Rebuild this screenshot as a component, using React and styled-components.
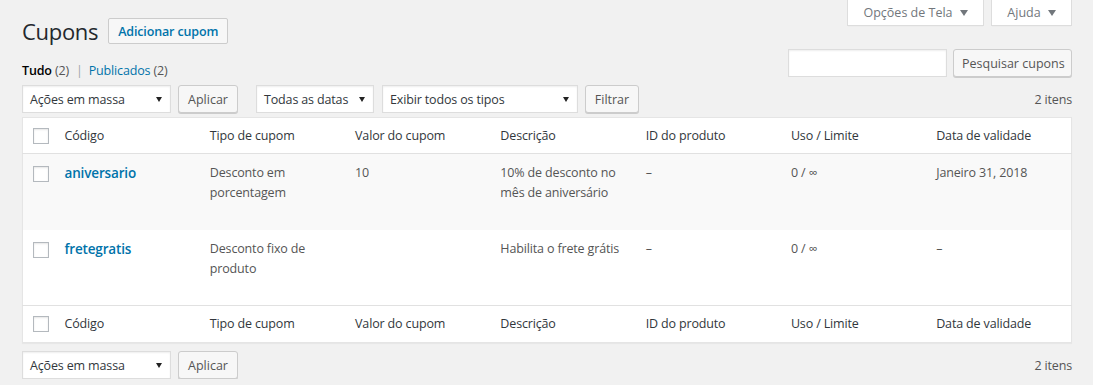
import React from "react";
import styled, { createGlobalStyle } from "styled-components";

const Global = createGlobalStyle`
  html, body { margin: 0; padding: 0; background: #f1f1f1; }
  body { font-family: "Open Sans", "Noto Sans", sans-serif; font-size: 12.5px; letter-spacing: -0.15px; color: #444; }
  * { box-sizing: border-box; }
`;

const Page = styled.div`
  padding: 0 21px 0 22px;
  width: 1093px;
`;

const TopRow = styled.div`
  display: flex;
  justify-content: space-between;
  align-items: flex-start;
`;

const TitleBlock = styled.div`
  display: flex;
  align-items: center;
  gap: 10px;
  padding-top: 18px;
`;

const Title = styled.h1`
  margin: 0;
  font-size: 22px;
  letter-spacing: -0.3px;
  font-weight: 400;
  line-height: 26px;
  color: #23282d;
`;

const PageTitleAction = styled.a`
  display: inline-flex;
  align-items: center;
  height: 26px;
  padding: 0 9px;
  border: 1px solid #ccc;
  border-radius: 2px;
  background: #f7f7f7;
  color: #0073aa;
  font-weight: 600;
  font-size: 12.5px;
  text-decoration: none;
`;

const MetaLinks = styled.div`
  display: flex;
  gap: 7px;
`;

const MetaTab = styled.button`
  display: flex;
  align-items: center;
  justify-content: center;
  gap: 7px;
  height: 26px;
  width: ${p => p.$w}px;
  background: #fff;
  border: 1px solid #ddd;
  border-top: none;
  box-shadow: 0 1px 1px -1px rgba(0,0,0,.1);
  font: inherit;
  color: #72777c;
  padding: 0;
`;

const Arrow = ({ w = 8, h = 6, color = "#72777c" }) => (
  <svg width={w} height={h} viewBox="0 0 8 6" preserveAspectRatio="none">
    <polygon points="0,0 8,0 4,6" fill={color} />
  </svg>
);

const SubRow = styled.div`
  display: flex;
  justify-content: space-between;
  align-items: flex-start;
  margin-top: 5px;
`;

const SubSub = styled.ul`
  list-style: none;
  margin: 0;
  padding: 13px 0 0;
  display: flex;
  line-height: 17px;
  color: #666;
`;

const SubItem = styled.li`
  a {
    color: ${p => (p.$current ? "#000" : "#0073aa")};
    font-weight: ${p => (p.$current ? 600 : 400)};
    text-decoration: none;
  }
`;

const Count = styled.span`
  color: #555;
  font-weight: 400;
`;

const Sep = styled.li`
  color: #a0a5aa;
  padding: 0 6px 0 7px;
`;

const SearchBox = styled.div`
  display: flex;
  gap: 6px;
`;

const Input = styled.input`
  width: 159px;
  height: 28px;
  border: 1px solid #ddd;
  box-shadow: inset 0 1px 2px rgba(0,0,0,.07);
  background: #fff;
  margin: 0;
`;

const Button = styled.button`
  height: 28px;
  padding: 0 8px;
  border: 1px solid #ccc;
  border-radius: 3px;
  background: #f7f7f7;
  box-shadow: 0 1px 0 #ccc;
  color: #555;
  font: inherit;
  white-space: nowrap;
  width: ${p => (p.$w ? `${p.$w}px` : "auto")};
`;

const TableNav = styled.div`
  display: flex;
  align-items: center;
  height: 28px;
  margin-top: ${p => p.$mt}px;
`;

const Group = styled.div`
  display: flex;
  align-items: center;
  gap: ${p => p.$gap || 7}px;
  margin-right: ${p => p.$mr || 0}px;
`;

const Select = styled.div`
  display: flex;
  align-items: center;
  justify-content: space-between;
  width: ${p => p.$w}px;
  height: 28px;
  padding: 0 8px 0 7px;
  background: #fff;
  border: 1px solid #ddd;
  box-shadow: inset 0 1px 2px rgba(0,0,0,.07);
  color: #32373c;
`;

const Items = styled.div`
  margin-left: auto;
  color: #555;
`;

const Table = styled.table`
  width: 100%;
  margin-top: 4px;
  border-collapse: collapse;
  table-layout: fixed;
  background: #fff;
  border: 1px solid #e5e5e5;
  box-shadow: 0 1px 1px rgba(0,0,0,.04);
`;

const Th = styled.th`
  text-align: left;
  font-weight: 400;
  color: #32373c;
  line-height: 20px;
  height: 36px;
  padding: 0 10px;
  vertical-align: middle;
  width: ${p => (p.$check ? "32px" : "auto")};
`;

const HeadRow = styled.tr`
  border-bottom: 1px solid #e1e1e1;
`;

const FootRow = styled.tr`
  border-top: 1px solid #e1e1e1;
  th { height: 37px; }
`;

const Tr = styled.tr`
  background: ${p => (p.$alt ? "#f9f9f9" : "#fff")};
`;

const Td = styled.td`
  vertical-align: top;
  height: 76px;
  padding: 9px 10px 0;
  line-height: 20px;
  color: #555;
`;

const CheckTd = styled.td`
  vertical-align: top;
  padding: 12px 0 0 10px;
`;

const CheckBox = styled.span`
  display: block;
  width: 16px;
  height: 16px;
  border: 1px solid #b4b9be;
  background: #fff;
  box-shadow: inset 0 1px 2px rgba(0,0,0,.1);
`;

const RowTitle = styled.a`
  color: #0073aa;
  font-weight: 600;
  font-size: 13.5px;
  text-decoration: none;
`;

const columns = ["Código", "Tipo de cupom", "Valor do cupom", "Descrição", "ID do produto", "Uso / Limite", "Data de validade"];

const rows = [
  { code: "aniversario", type: "Desconto em porcentagem", value: "10", desc: "10% de desconto no mês de aniversário", id: "–", usage: "0 / ∞", date: "Janeiro 31, 2018" },
  { code: "fretegratis", type: "Desconto fixo de produto", value: "", desc: "Habilita o frete grátis", id: "–", usage: "0 / ∞", date: "–" },
];

const HeaderCells = () => (
  <>
    <Th $check><CheckBox /></Th>
    {columns.map(c => <Th key={c}>{c}</Th>)}
  </>
);

const SelArrow = () => <Arrow w={6} h={5} color="#222" />;

export default function App() {
  return (
    <Page>
      <Global />
      <TopRow>
        <TitleBlock>
          <Title>Cupons</Title>
          <PageTitleAction href="#">Adicionar cupom</PageTitleAction>
        </TitleBlock>
        <MetaLinks>
          <MetaTab $w={137}>Opções de Tela <Arrow /></MetaTab>
          <MetaTab $w={81}>Ajuda <Arrow /></MetaTab>
        </MetaLinks>
      </TopRow>

      <SubRow>
        <SubSub>
          <SubItem $current><a href="#">Tudo <Count>(2)</Count></a></SubItem>
          <Sep>|</Sep>
          <SubItem><a href="#">Publicados <Count>(2)</Count></a></SubItem>
        </SubSub>
        <SearchBox>
          <Input type="search" />
          <Button $w={119}>Pesquisar cupons</Button>
        </SearchBox>
      </SubRow>

      <TableNav $mt={6}>
        <Group $mr={18}>
          <Select $w={149}>Ações em massa <SelArrow /></Select>
          <Button $w={60}>Aplicar</Button>
        </Group>
        <Group $gap={8}>
          <Select $w={118}>Todas as datas <SelArrow /></Select>
          <Group>
            <Select $w={196}>Exibir todos os tipos <SelArrow /></Select>
            <Button $w={54}>Filtrar</Button>
          </Group>
        </Group>
        <Items>2 itens</Items>
      </TableNav>

      <Table>
        <thead>
          <HeadRow><HeaderCells /></HeadRow>
        </thead>
        <tbody>
          {rows.map((r, i) => (
            <Tr key={r.code} $alt={i % 2 === 0}>
              <CheckTd><CheckBox /></CheckTd>
              <Td><RowTitle href="#">{r.code}</RowTitle></Td>
              <Td>{r.type}</Td>
              <Td>{r.value}</Td>
              <Td>{r.desc}</Td>
              <Td>{r.id}</Td>
              <Td>{r.usage}</Td>
              <Td>{r.date}</Td>
            </Tr>
          ))}
        </tbody>
        <tfoot>
          <FootRow><HeaderCells /></FootRow>
        </tfoot>
      </Table>

      <TableNav $mt={8}>
        <Group>
          <Select $w={149}>Ações em massa <SelArrow /></Select>
          <Button $w={60}>Aplicar</Button>
        </Group>
        <Items>2 itens</Items>
      </TableNav>
    </Page>
  );
}
